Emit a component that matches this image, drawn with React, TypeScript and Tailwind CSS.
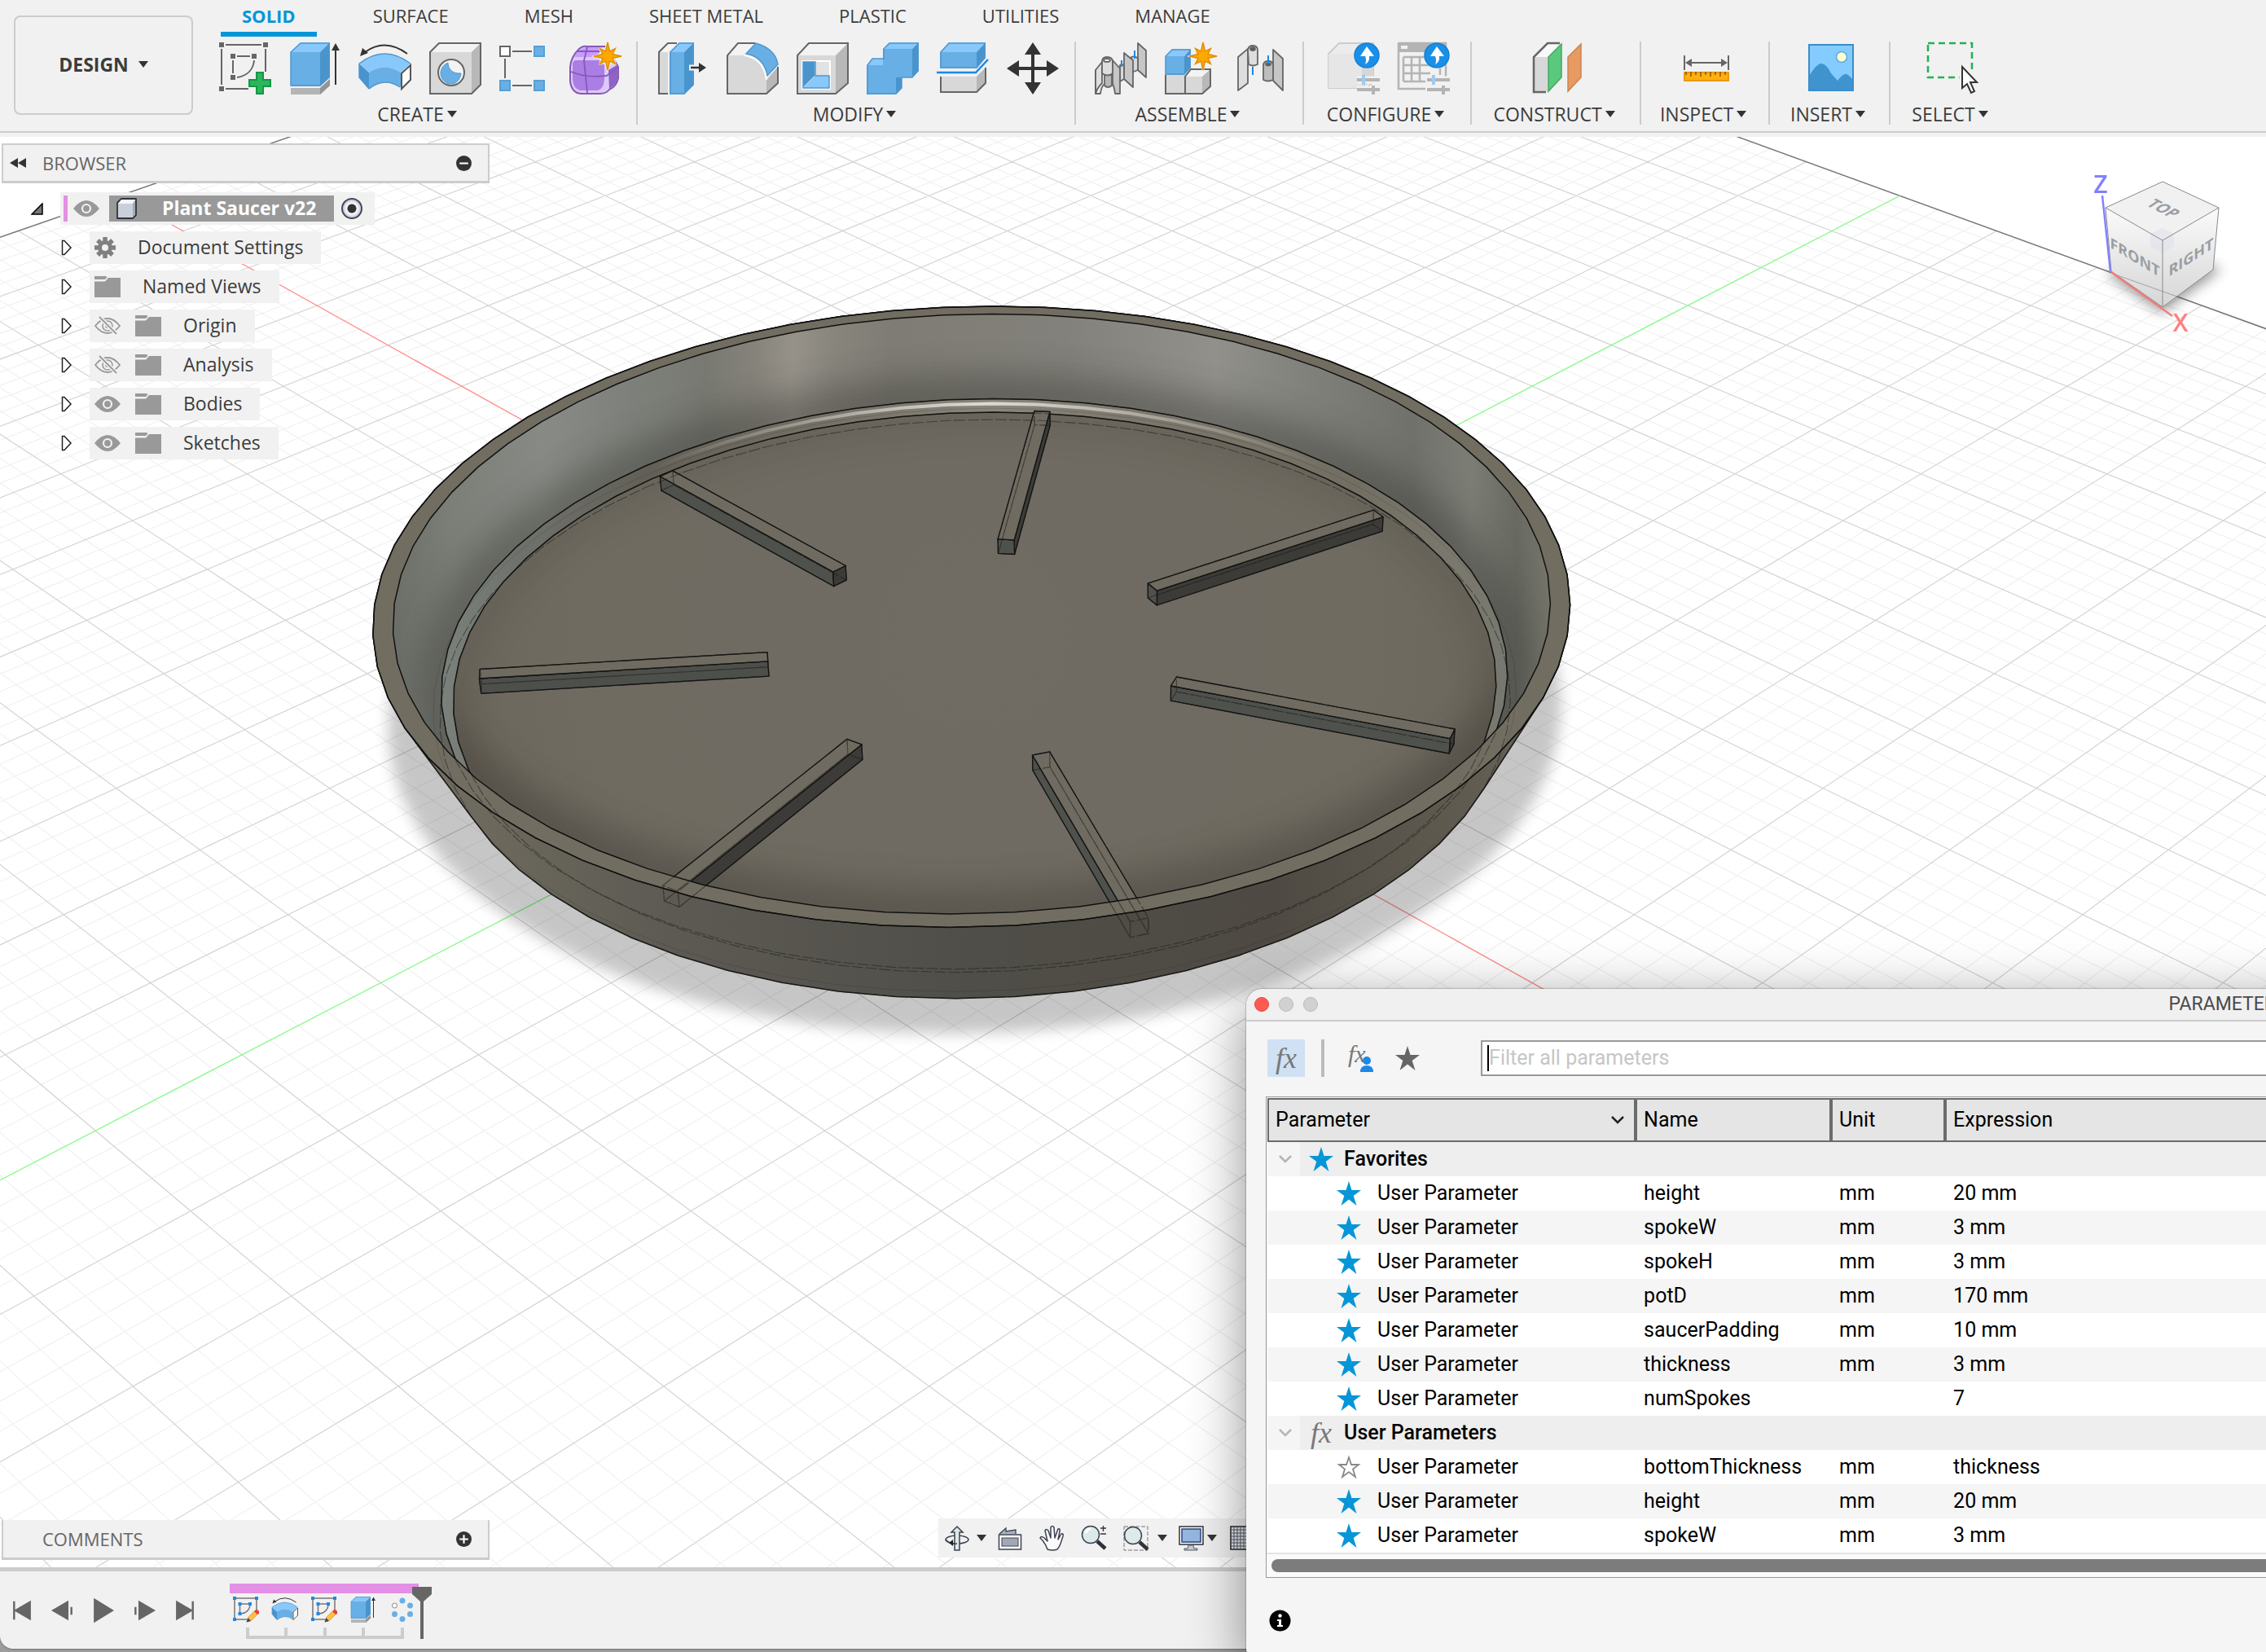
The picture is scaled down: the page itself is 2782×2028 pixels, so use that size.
import { useState } from 'react';
import type { ReactNode } from 'react';

// ---------------------------------------------------------------------------
// Camera: maps millimetres on the build plane (u, v) and height h to the canvas
// ---------------------------------------------------------------------------
type Point = [number, number];

const UNIT = 0.0009344;

function project(u: number, v: number, h = 0): Point {
  const w = 1 + (u + v - h) * UNIT;
  return [
    (1200 + UNIT * (-3950 * u + 6739 * v - 1391 * h)) / w,
    (827 - UNIT * (2043 * u + 2043 * v + 7218 * h)) / w
  ];
}

function circle(radius: number, h: number, steps = 64): Point[] {
  return Array.from({ length: steps }, (_, i) => {
    const a = (i / steps) * Math.PI * 2;
    return project(radius * Math.cos(a), radius * Math.sin(a), h);
  });
}

function toPath(points: Point[], close = true) {
  return 'M' + points.map(([x, y]) => `${x.toFixed(1)} ${y.toFixed(1)}`).join('L') + (close ? 'Z' : '');
}

function hull(points: Point[]): Point[] {
  const sorted = [...points].sort((a, b) => a[0] - b[0] || a[1] - b[1]);
  const cross = (o: Point, a: Point, b: Point) =>
    (a[0] - o[0]) * (b[1] - o[1]) - (a[1] - o[1]) * (b[0] - o[0]);
  const half = (list: Point[]) => {
    const out: Point[] = [];
    for (const p of list) {
      while (out.length > 1 && cross(out[out.length - 2], out[out.length - 1], p) <= 0) out.pop();
      out.push(p);
    }
    out.pop();
    return out;
  };
  return [...half(sorted), ...half(sorted.reverse())];
}

const EXTENT = 275;

function gridLines(isMajor: boolean) {
  let d = '';
  for (let i = -55; i <= 55; i++) {
    if ((i % 5 === 0) !== isMajor || i === 0) continue;
    const k = i * 5;
    d += toPath([project(k, -EXTENT), project(k, EXTENT)], false);
    d += toPath([project(-EXTENT, k), project(EXTENT, k)], false);
  }
  return d;
}

const MINOR_GRID = gridLines(false);
const MAJOR_GRID = gridLines(true);
const GRID_EDGE = toPath([project(EXTENT, -EXTENT), project(EXTENT, EXTENT), project(-EXTENT, EXTENT)], false);
const X_AXIS = toPath([project(-EXTENT, 0), project(EXTENT, 0)], false);
const Y_AXIS = toPath([project(0, -EXTENT), project(0, EXTENT)], false);

const RIM_OUTER = toPath(circle(101.1, 20));
const RIM_INNER = toPath(circle(97.8, 20));
const BASE_OUTER = toPath(circle(92.3, 0));
const BASE_LIP = toPath(circle(93.2, 2));
const FILLET_TOP = toPath(circle(91.5, 5));
const FILLET_SHINE = toPath(circle(90.8, 4.3));
const FLOOR = toPath(circle(89.7, 3));
const SHADOW = toPath(circle(101, 0));
const SILHOUETTE = toPath(hull([...circle(101.1, 20), ...circle(92.3, 0)]));

const SPOKES = Array.from({ length: 7 }, (_, i) => {
  const a = (i / 7) * Math.PI * 2;
  const dir: Point = [Math.cos(a), Math.sin(a)];
  const corner = (r: number, side: number, h: number) =>
    project(dir[0] * r - dir[1] * side, dir[1] * r + dir[0] * side, h);
  const ring = (h: number) => [corner(36, -1.5, h), corner(85, -1.5, h), corner(85, 1.5, h), corner(36, 1.5, h)];
  const bottom = ring(3);
  const top = ring(6);
  const faces = top.map((p, n) => {
    const m = (n + 1) % 4;
    const q = top[m];
    // top edge running right to left on the near side faces the viewer
    const visible = q[0] < p[0];
    const slope = (q[1] - p[1]) / (q[0] - p[0]);
    const fill = slope > 0.05 ? '#4f524c' : slope < -0.2 ? '#3c3b37' : '#4d4f4a';
    return { d: toPath([p, q, bottom[m], bottom[n]]), visible, fill };
  });
  return { top: toPath(top), bottom: toPath(bottom), faces };
});

function Model() {
  return (
    <svg
      className="absolute inset-0 h-full w-full"
      viewBox="0 168 2782 1756"
      preserveAspectRatio="xMinYMin slice"
      aria-hidden="true"
    >
      <defs>
        <filter id="soft" x="-10%" y="-10%" width="120%" height="120%">
          <feGaussianBlur stdDeviation="9" />
        </filter>
        <filter id="softer" x="-20%" y="-20%" width="140%" height="140%">
          <feGaussianBlur stdDeviation="20" />
        </filter>
        <clipPath id="inside">
          <path d={RIM_INNER} />
        </clipPath>
        <clipPath id="floorClip">
          <path d={FLOOR} />
        </clipPath>
        <linearGradient id="outerWall" gradientUnits="userSpaceOnUse" x1="458" x2="1928" y1="0" y2="0">
          <stop offset="0" stopColor="#77736a" />
          <stop offset="0.1" stopColor="#6c685c" />
          <stop offset="0.25" stopColor="#5c5a53" />
          <stop offset="0.5" stopColor="#504e48" />
          <stop offset="0.75" stopColor="#4e4a43" />
          <stop offset="0.92" stopColor="#605c51" />
          <stop offset="1" stopColor="#6c685c" />
        </linearGradient>
        <linearGradient id="innerWall" gradientUnits="userSpaceOnUse" x1="483" x2="1905" y1="0" y2="0">
          <stop offset="0" stopColor="#6c6f68" />
          <stop offset="0.05" stopColor="#7c7f78" />
          <stop offset="0.13" stopColor="#888b85" />
          <stop offset="0.21" stopColor="#7d807a" />
          <stop offset="0.27" stopColor="#787972" />
          <stop offset="0.31" stopColor="#85827a" />
          <stop offset="0.345" stopColor="#96928a" />
          <stop offset="0.38" stopColor="#88857d" />
          <stop offset="0.43" stopColor="#7e7c74" />
          <stop offset="0.58" stopColor="#83817b" />
          <stop offset="0.71" stopColor="#91908b" />
          <stop offset="0.8" stopColor="#7e7f79" />
          <stop offset="0.88" stopColor="#70716b" />
          <stop offset="0.93" stopColor="#7c7e76" />
          <stop offset="0.97" stopColor="#686a62" />
          <stop offset="1" stopColor="#76756b" />
        </linearGradient>
        <linearGradient id="fillet" gradientUnits="userSpaceOnUse" x1="530" x2="1860" y1="0" y2="0">
          <stop offset="0" stopColor="#7c827d" />
          <stop offset="0.08" stopColor="#6f726c" />
          <stop offset="0.2" stopColor="#625f56" />
          <stop offset="0.4" stopColor="#7a756a" />
          <stop offset="0.52" stopColor="#8b867b" />
          <stop offset="0.64" stopColor="#7d786c" />
          <stop offset="0.85" stopColor="#726e62" />
          <stop offset="0.95" stopColor="#7b786d" />
          <stop offset="1" stopColor="#757870" />
        </linearGradient>
        <linearGradient id="shine" gradientUnits="userSpaceOnUse" x1="800" x2="1620" y1="0" y2="0">
          <stop offset="0" stopColor="#ffffff" stopOpacity="0" />
          <stop offset="0.5" stopColor="#ffffff" stopOpacity="0.7" />
          <stop offset="1" stopColor="#ffffff" stopOpacity="0" />
        </linearGradient>
        <radialGradient id="floorFill" gradientUnits="userSpaceOnUse" cx="1195" cy="780" r="690">
          <stop offset="0" stopColor="#706b63" />
          <stop offset="0.7" stopColor="#6f6b61" />
          <stop offset="1" stopColor="#6b665c" />
        </radialGradient>
      </defs>

      <rect x="0" y="168" width="2782" height="1756" fill="#ffffff" />
      <path d={MINOR_GRID} stroke="#f1f1f1" strokeWidth="1.2" fill="none" />
      <path d={MAJOR_GRID} stroke="#d4d4d4" strokeWidth="1.2" fill="none" />
      <path d={GRID_EDGE} stroke="#777777" strokeWidth="1.4" fill="none" />
      <path d={X_AXIS} stroke="#ff9090" strokeWidth="1.4" />
      <path d={Y_AXIS} stroke="#90f990" strokeWidth="1.4" />

      <path d={SHADOW} fill="#000000" opacity="0.22" filter="url(#soft)" />

      {/* Saucer body */}
      <path d={SILHOUETTE} fill="url(#outerWall)" stroke="#1c1b19" strokeWidth="1.6" />
      <path d={RIM_OUTER} fill="#726d61" stroke="#111111" strokeWidth="1.3" />
      <path d={RIM_INNER} fill="url(#innerWall)" />
      <g clipPath="url(#inside)">
        <path d={FILLET_TOP} fill="none" stroke="#3b3b36" strokeWidth="60" opacity="0.45" filter="url(#softer)" />
        <path d={FILLET_TOP} fill="url(#fillet)" stroke="#111111" strokeWidth="1.5" />
        <path d={FILLET_SHINE} fill="none" stroke="url(#shine)" strokeWidth="4" />
        <path d={FLOOR} fill="url(#floorFill)" />
        <g clipPath="url(#floorClip)">
          <path d={RIM_INNER} fill="none" stroke="#3d3831" strokeWidth="60" opacity="0.4" filter="url(#softer)" />
          <path d={FLOOR} fill="none" stroke="#4c463d" strokeWidth="26" opacity="0.35" filter="url(#softer)" />
        </g>
        <path d={FLOOR} fill="none" stroke="#111111" strokeWidth="1.5" />
        {SPOKES.map((spoke) => (
          <g key={spoke.top} stroke="#111111" strokeWidth="1.3" strokeLinejoin="round">
            {spoke.faces.filter((face) => face.visible).map((face) => (
              <path key={face.d} d={face.d} fill={face.fill} />
            ))}
            <path d={spoke.top} fill="#6f6b60" />
          </g>
        ))}
      </g>

      {/* Hidden edges */}
      <g fill="none" stroke="#1a1a18" strokeWidth="1.1" strokeDasharray="14 3" opacity="0.5">
        <path d={BASE_OUTER} />
        <path d={FLOOR} />
        <path d={FILLET_TOP} />
        {SPOKES.map((spoke) => (
          <g key={spoke.bottom}>
            <path d={spoke.bottom} />
            <path d={spoke.top} />
            {spoke.faces.map((face) => (
              <path key={face.d} d={face.d} />
            ))}
          </g>
        ))}
      </g>
      <path d={BASE_LIP} fill="none" stroke="#111111" strokeWidth="1" opacity="0.15" />
      <path d={RIM_INNER} fill="none" stroke="#111111" strokeWidth="1.5" />
      <path d={RIM_OUTER} fill="none" stroke="#111111" strokeWidth="1.5" />
    </svg>
  );
}

function ViewCube() {
  return (
    <svg className="absolute top-0 right-0 h-[292px] w-[382px]" viewBox="0 8 382 292" role="img" aria-label="View cube">
      <defs>
        <filter id="cubeShadow" x="-30%" y="-30%" width="160%" height="160%">
          <feGaussianBlur stdDeviation="8" />
        </filter>
        <linearGradient id="cubeSide" x1="0" x2="0" y1="0" y2="1">
          <stop offset="0" stopColor="#fafafa" />
          <stop offset="1" stopColor="#d6d6d6" />
        </linearGradient>
      </defs>
      <path d="M186 176L254 148L328 170L254 224Z" fill="#000000" opacity="0.4" filter="url(#cubeShadow)" />
      <path d="M255 63L185 95L255 135L324 95Z" fill="#f1f1f1" />
      <path d="M185 95L255 135V217L192 173Z" fill="url(#cubeSide)" />
      <path d="M324 95L255 135V217L317 171Z" fill="url(#cubeSide)" />
      <path d="M255 120L269 127V142L255 151L240 142V127Z" fill="#dfe0ea" opacity="0.55" />
      <path
        d="M255 63L185 95L255 135L324 95ZM185 95L192 173L255 217L317 171L324 95M255 135V217"
        fill="none"
        stroke="#8a8a8a"
        strokeLinejoin="round"
      />
      <path d="M194 176L382 243" stroke="#777777" strokeWidth="1" opacity="0.6" />
      <g fill="#9a9ea3" fontFamily='"Open Sans", sans-serif' fontWeight="700" textAnchor="middle">
        <text transform="translate(250 100) rotate(27) skewX(-30)" fontSize="18">TOP</text>
        <text transform="translate(221 162) skewY(31)" fontSize="18">FRONT</text>
        <text transform="translate(290 162) skewY(-33)" fontSize="18">RIGHT</text>
      </g>
      <path d="M181 80L191 173" stroke="#8080ff" strokeWidth="2.4" />
      <path d="M192 174L267 228" stroke="#f47c7c" strokeWidth="2.4" />
      <g fontFamily='"Open Sans", sans-serif' fontSize="30" fontWeight="600" textAnchor="middle">
        <text x="179" y="77" fill="#8080ff">Z</text>
        <text x="277" y="247" fill="#ff7f7f">X</text>
      </g>
    </svg>
  );
}

// ---------------------------------------------------------------------------
// Icons
// ---------------------------------------------------------------------------
function Icon({ children, size = 'size-16', box = '0 0 64 64' }: { children: ReactNode; size?: string; box?: string }) {
  return (
    <svg className={`${size} shrink-0 overflow-visible`} viewBox={box} fill="none" aria-hidden="true">
      {children}
    </svg>
  );
}

function burst(cx: number, cy: number, outer: number, inner: number, n: number) {
  return Array.from({ length: n * 2 }, (_, i) => {
    const r = i % 2 ? inner : i % 4 ? outer * 0.78 : outer;
    const a = (i / (n * 2)) * Math.PI * 2 - Math.PI / 2;
    return `${(cx + r * Math.cos(a)).toFixed(1)},${(cy + r * Math.sin(a)).toFixed(1)}`;
  }).join(' ');
}

const Burst = () => (
  <>
    <polygon points={burst(47, 17, 20, 10, 8)} fill="#f1f1f1" />
    <polygon points={burst(47, 17, 17, 6.5, 8)} fill="#ffa800" stroke="#e08f00" strokeWidth="1.5" />
  </>
);

const SketchIcon = () => (
  <Icon>
    <path d="M8 3H52M3 8V52M57 8V36M8 57H36M22 17H38M17 22V38M43 22C42 33 35 41 22 43" stroke="#666666" strokeWidth="2" />
    <path fill="#666666" d="M0 0h6v6H0zM54 0h6v6h-6zM0 54h6v6H0zM14 14h6v6h-6zM40 14h6v6h-6zM14 40h6v6h-6z" />
    <path d="M46 37h8v9h9v8h-9v9h-8v-9h-9v-8h9z" fill="#2bb659" stroke="#149645" strokeWidth="2" />
  </Icon>
);

const ExtrudeShape = () => (
  <>
    <path d="M2 56H38L50 45V53L38 64H2Z" fill="#b5b5b5" />
    <path d="M38 56L50 45V53L38 64Z" fill="#949494" />
    <path d="M2 12H38V54H2Z" fill="#68afe5" />
    <path d="M2 12L14 0H50L38 12Z" fill="#88c8fa" />
    <path d="M38 12L50 0V43L38 54Z" fill="#4a94cd" />
    <path d="M2 12L14 1H49V43L38 53H2Z" stroke="#4f97cf" strokeWidth="1.5" />
    <path d="M57 52V8" stroke="#333333" strokeWidth="2" />
    <path d="M52 10L57 1L62 10Z" fill="#333333" />
  </>
);

const RevolveShape = () => (
  <>
    <path d="M0 26L12 37V57L0 43Z" fill="#4a94cd" />
    <path d="M0 26Q31 2 63 26L51 37Q31 24 12 37Z" fill="#88c8fa" />
    <path d="M12 37Q31 24 51 37V55Q31 42 12 57Z" fill="#68afe5" />
    <path d="M0 26Q31 2 63 26M12 57Q31 42 50 55M0 26V43L12 57" stroke="#4f97cf" strokeWidth="1.5" />
    <path d="M52 38L63 28V46L52 57Z" fill="#ffffff" stroke="#555555" strokeWidth="2" />
    <path d="M59 14Q32 -6 7 12" stroke="#333333" strokeWidth="2" />
    <path d="M1 17L4 7L11 13Z" fill="#333333" />
  </>
);

const HoleIcon = () => (
  <Icon>
    <path d="M1 12L12 1H63L52 12Z" fill="#f3f3f3" />
    <path d="M1 12H52V63H1Z" fill="#d8d8d8" />
    <path d="M52 12L63 1V52L52 63Z" fill="#b8b8b8" />
    <path d="M1 12L12 1H63V52L52 63H1Z" stroke="#666666" strokeWidth="2" />
    <circle cx="27" cy="37" r="16" fill="#f3f3f3" stroke="#666666" strokeWidth="2" />
    <path d="M23 25C23 33 29 39 39 38C38 46 33 51 27 51C20 51 14 45 14 38C14 32 18 27 23 25Z" fill="#68afe5" stroke="#4f97cf" />
  </Icon>
);

const PatternIcon = () => (
  <Icon>
    <path d="M1 5h12v12H1z" fill="#ffffff" stroke="#666666" strokeWidth="2" />
    <path d="M43 5h12v12H43zM1 47h12v12H1zM43 47h12v12H43z" fill="#68afe5" stroke="#579fd5" strokeWidth="2" />
    <path d="M16 11H40M16 53H40M7 20V44" stroke="#666666" strokeWidth="2" />
  </Icon>
);

const FormIcon = () => (
  <Icon>
    <path d="M11 9Q16 4 22 5H46L60 30V44Q58 54 49 58Q45 63 38 63H14Q3 62 1 48V30Q2 18 11 9Z" fill="#ddc8f7" stroke="#8659b8" strokeWidth="2" />
    <path d="M6 18Q10 9 20 6H40L34 18Z" fill="#c79bfb" />
    <path d="M4 27Q4 22 9 22H36Q43 22 43 30V46Q42 58 34 59H13Q5 57 4 46Z" fill="#ab7ee6" />
    <path d="M48 34L60 27V42Q58 52 49 57Z" fill="#8f63c6" />
    <path d="M22 6L18 22Q20 42 22 62M2 36Q20 44 46 41L60 30M10 11H42" stroke="#8659b8" strokeWidth="1.8" />
    <Burst />
  </Icon>
);

const PressPullIcon = () => (
  <Icon>
    <path d="M3 13L14 1H25L14 12V63H3Z" fill="#d8d8d8" />
    <path d="M3 12L14 1H25L14 12Z" fill="#f5f5f5" />
    <path d="M25 1H14L3 12V63H14" stroke="#666666" strokeWidth="2" />
    <path d="M16 12H34V64H16Z" fill="#68afe5" />
    <path d="M16 12L28 0H46L34 12Z" fill="#88c8fa" />
    <path d="M34 12L46 0V52L34 64Z" fill="#4a94cd" />
    <path d="M17 12L28 1H45V52L34 63H17Z" stroke="#4f97cf" strokeWidth="1.5" />
    <path d="M40 31H56" stroke="#f1f1f1" strokeWidth="7" />
    <path d="M42 31H54" stroke="#333333" strokeWidth="2.5" />
    <path d="M52 25L61 31L52 37Z" fill="#333333" />
  </Icon>
);

const FilletIcon = () => (
  <Icon>
    <path d="M1 16L14 1H33L24 13V16Z" fill="#f3f3f3" />
    <path d="M1 16H23Q46 22 49 44V63H1Z" fill="#d8d8d8" />
    <path d="M49 46L63 30V50L49 63Z" fill="#b8b8b8" />
    <path d="M35 1H14L1 16V63H49L63 50V30" stroke="#666666" strokeWidth="2" />
    <path d="M24 14L36 1Q60 8 63 27L50 41Q46 18 24 14Z" fill="#68afe5" stroke="#4f97cf" strokeWidth="1.5" />
    <path d="M22 16Q46 20 49 46" stroke="#ffffff" strokeWidth="2" />
  </Icon>
);

const ShellIcon = () => (
  <Icon>
    <path d="M1 16L15 1H63L48 16Z" fill="#f3f3f3" />
    <path d="M1 16H48V63H1Z" fill="#d8d8d8" />
    <path d="M48 16L63 1V50L48 63Z" fill="#b8b8b8" />
    <path d="M1 16L15 1H63V50L48 63H1Z" stroke="#666666" strokeWidth="2" />
    <path d="M7 23H41V57H7Z" fill="#e2e2e2" stroke="#ffffff" strokeWidth="2" />
    <path d="M8 24H22V41L8 55Z" fill="#4a94cd" />
    <path d="M8 56L23 41H40V56Z" fill="#88c8fa" />
    <path d="M8 24V56H40V41H23V24Z" stroke="#4f97cf" strokeWidth="1.5" />
  </Icon>
);

const CombineIcon = () => (
  <Icon>
    <path d="M20 8H56V43H36V64H0V28H20Z" fill="#68afe5" />
    <path d="M20 8L28 0H64L56 8ZM0 28L7 20H20V28Z" fill="#88c8fa" />
    <path d="M56 8L64 0V35L56 43ZM36 43H43V56L36 64Z" fill="#4a94cd" />
    <path d="M21 20V8L28 1H63V35L56 43H43V56L36 63H1V28L7 20Z" stroke="#4f97cf" strokeWidth="1.5" />
  </Icon>
);

const SplitIcon = () => (
  <Icon>
    <path d="M4 12H49V32H4Z" fill="#68afe5" />
    <path d="M4 12L15 0H60L49 12Z" fill="#88c8fa" />
    <path d="M49 12L60 0V19L49 32Z" fill="#4a94cd" />
    <path d="M5 12L15 1H59V19L49 31H5Z" stroke="#4f97cf" strokeWidth="1.5" />
    <path d="M0 37H48L63 21" stroke="#1e88e5" strokeWidth="2.5" />
    <path d="M5 42H49L60 31V50L49 61H5Z" fill="#d8d8d8" />
    <path d="M49 42L60 31V50L49 61Z" fill="#b8b8b8" />
    <path d="M5 42V61H49L60 50V31" stroke="#666666" strokeWidth="2" />
  </Icon>
);

const MoveIcon = () => (
  <Icon>
    <path d="M32 10V54M10 32H54" stroke="#333333" strokeWidth="4" />
    <path d="M32 0L42 15H22ZM32 64L42 49H22ZM0 32L15 22V42ZM64 32L49 22V42Z" fill="#333333" />
  </Icon>
);

const JointGroupIcon = () => (
  <Icon>
    <g stroke="#666666" strokeWidth="1.8" strokeLinejoin="round">
      <path d="M53 1L63 10V43L53 34Z" fill="#c6c6c6" />
      <path d="M45 37V18Q50 16 53 20V34Z" fill="#d8d8d8" />
      <path d="M36 13L47 22V55L36 45Z" fill="#c6c6c6" />
      <path d="M31 28Q34 26 36 29V45L31 48Z" fill="#d8d8d8" />
      <path d="M12 40H21V53Q16 57 12 53Z" fill="#b8b8b8" />
      <path d="M1 34L9 24V50Q3 56 1 63Z" fill="#dedede" />
      <path d="M22 22L31 32V63H25Q24 55 22 51Z" fill="#c6c6c6" />
      <path d="M9 24Q9 18 15 18Q22 18 22 24V38Q16 43 9 38Z" fill="#dedede" />
      <path d="M1 34V63H7Q8 54 12 51" />
      <ellipse cx="15" cy="22" rx="4" ry="2" fill="#ffffff" />
    </g>
    <path d="M33 22V30M49 10V20" stroke="#1e88e5" strokeWidth="2" />
  </Icon>
);

const NewComponentIcon = () => (
  <Icon>
    <path d="M1 40H24V63H1ZM24 40H46V63H24Z" fill="#d8d8d8" />
    <path d="M24 42L32 33H56L46 42Z" fill="#f3f3f3" />
    <path d="M46 42L56 33V54L46 63Z" fill="#b8b8b8" />
    <path d="M1 40V63H46L56 54V33H32L25 42V63" stroke="#666666" strokeWidth="2" />
    <path d="M1 17H24V40H1Z" fill="#68afe5" />
    <path d="M1 17L9 8H32L24 17Z" fill="#88c8fa" />
    <path d="M24 17L32 8V31L24 40Z" fill="#4a94cd" />
    <path d="M1 17L9 9H31V31L24 39H1Z" stroke="#4f97cf" strokeWidth="1.5" />
    <Burst />
  </Icon>
);

const JointIcon = () => (
  <Icon>
    <g stroke="#666666" strokeWidth="1.8" strokeLinejoin="round">
      <path d="M4 18L16 8V50L4 59Z" fill="#dedede" />
      <path d="M16 9Q17 4 22 4Q28 4 28 10V27Q22 30 17 27Z" fill="#dedede" />
      <ellipse cx="22" cy="8" rx="3" ry="2" fill="#555555" />
      <path d="M47 9L59 20V59L47 47Z" fill="#c6c6c6" />
      <path d="M35 27Q36 23 41 23Q47 23 47 28V46Q41 49 35 46Z" fill="#bdbdbd" />
      <ellipse cx="41" cy="27" rx="3" ry="1.5" fill="#555555" />
    </g>
    <path d="M22 30V40M41 16V26" stroke="#1e88e5" strokeWidth="2" />
  </Icon>
);

const UpBadge = () => (
  <>
    <circle cx="48" cy="16" r="15" fill="#1a8fe8" stroke="#1480d2" strokeWidth="1.5" />
    <path d="M48 5L57 17H51Q52 24 46 27Q48 22 46 17H40Z" fill="#ffffff" />
    <path d="M36 46H64M36 58H64" stroke="#f1f1f1" strokeWidth="9" />
    <path d="M36 46H64M36 58H64M56 53V64" stroke="#b4b4b4" strokeWidth="4" />
    <path d="M44 40V52" stroke="#9dcbf0" strokeWidth="4" />
  </>
);

const ConfigureModelIcon = () => (
  <Icon>
    <path d="M1 14L14 1H56V48L48 56H1Z" fill="#ececec" stroke="#c0c0c0" strokeWidth="1.5" />
    <path d="M1 14H42V56H1Z" fill="#e6e6e6" />
    <path d="M42 28L56 22V46L42 56Z" fill="#d6d6d6" />
    <UpBadge />
  </Icon>
);

const ConfigureTableIcon = () => (
  <Icon>
    <path d="M1 1H59V42M1 1V57H34" stroke="#b4b4b4" strokeWidth="2.5" />
    <path d="M0 0H60V12H0Z" fill="#b4b4b4" />
    <path d="M4 4H12V8H4Z" fill="#f1f1f1" />
    <path d="M7 18H36M7 28H40M7 38H40M7 48H34M7 18V48M17 18V48M27 18V48M52 32V40" stroke="#b4b4b4" strokeWidth="2.5" />
    <UpBadge />
  </Icon>
);

const ConstructIcon = () => (
  <Icon>
    <path d="M3 18L19 1H35L20 18Z" fill="#f8f8f8" />
    <path d="M3 18H20V61H3Z" fill="#d8d8d8" />
    <path d="M35 1H20L3 18V61H18" stroke="#666666" strokeWidth="2.5" />
    <path d="M21 18L37 2V43L21 60Z" fill="#5bc97d" stroke="#41a863" strokeWidth="1.5" />
    <path d="M45 18L61 2V43L45 60Z" fill="#e89a63" stroke="#cc8350" strokeWidth="1.5" />
  </Icon>
);

const InspectIcon = () => (
  <Icon>
    <path d="M5 16V34M59 16V34M10 25H54" stroke="#666666" strokeWidth="2" />
    <path d="M6 25L14 20V30ZM58 25L50 20V30Z" fill="#666666" />
    <path d="M5 37H59V47H5Z" fill="#ffaf0f" stroke="#e89a00" strokeWidth="2" />
    <path d="M7 36V40M13 36V42M19 36V40M25 36V42M31 36V40M37 36V42M43 36V40M49 36V42M55 36V40" stroke="#8a5a00" strokeWidth="1.5" />
  </Icon>
);

const InsertIcon = () => (
  <Icon>
    <path d="M4 3H60V59H4Z" fill="#84ccff" />
    <path d="M4 43Q14 26 20 26Q26 26 32 38L40 47Q47 38 50 39Q54 39 60 48V59H4Z" fill="#3f94cf" />
    <circle cx="45" cy="18" r="6.5" fill="#ffffd0" stroke="#5fa9dd" strokeWidth="1.5" />
    <path d="M5 3H59V59H5Z" stroke="#3b8dc8" strokeWidth="2" />
  </Icon>
);

const SelectIcon = () => (
  <Icon>
    <path d="M1 1H55V43H1Z" stroke="#1fb254" strokeWidth="2.5" strokeDasharray="8 5" />
    <path d="M42 27V58L49 51L54 64L60 61L55 49H64Z" fill="#ffffff" stroke="#f1f1f1" strokeWidth="5" />
    <path d="M43 30V56L49 51L54 62L58 60L53 49H61Z" fill="#ffffff" stroke="#333333" strokeWidth="2" />
  </Icon>
);

// Timeline variant of the sketch icon, with a pencil
const SketchEdit = () => (
  <Icon size="size-8">
    <path d="M4 4H58M4 4V56M58 4V40M4 56H36M17 18H42M17 18V42M42 18C42 32 32 42 17 42" stroke="#777777" strokeWidth="3" />
    <path d="M0 0h8v8H0zM54 0h8v8h-8zM0 52h8v8H0zM13 14h8v8h-8zM38 14h8v8h-8zM13 38h8v8h-8z" fill="#1e88e5" />
    <path d="M34 62L38 50L52 36L60 44L46 58Z" fill="#ffbd45" stroke="#d99a2b" strokeWidth="1.5" />
    <path d="M52 36Q58 28 64 36V42L60 44Z" fill="#ee3a3a" />
    <path d="M33 63L37 52L44 60Z" fill="#444444" />
  </Icon>
);

const CircularPattern = () => (
  <Icon size="size-8">
    <g fill="#68afe5">
      <circle cx="32" cy="10" r="7" />
      <circle cx="51" cy="22" r="7" />
      <circle cx="51" cy="43" r="7" />
      <circle cx="32" cy="55" r="7" />
      <circle cx="13" cy="43" r="7" />
    </g>
    <circle cx="13" cy="22" r="6" fill="#ffffff" stroke="#888888" strokeWidth="2" />
  </Icon>
);

const Caret = () => (
  <svg className="h-2.5 w-3" viewBox="0 0 12 10" aria-hidden="true">
    <path d="M0 1H12L6 9Z" fill="#333333" />
  </svg>
);

const EyeIcon = () => (
  <Icon size="h-5 w-8" box="0 0 32 20">
    <path d="M0 10Q8 0 16 0T32 10Q24 20 16 20T0 10Z" fill="#999999" />
    <circle cx="16" cy="10" r="5" stroke="#f1f1f1" strokeWidth="2.2" />
  </Icon>
);

const EyeOffIcon = () => (
  <Icon size="h-5 w-8" box="0 0 32 20">
    <path d="M1 10Q8 1 16 1T31 10Q24 19 16 19T1 10Z" stroke="#999999" strokeWidth="1.8" />
    <circle cx="16" cy="10" r="6" stroke="#999999" strokeWidth="1.6" />
    <circle cx="16" cy="10" r="2.2" stroke="#999999" strokeWidth="1.5" />
    <path d="M6 -1L27 20" stroke="#f1f1f1" strokeWidth="5" />
    <path d="M6 -1L27 20" stroke="#999999" strokeWidth="1.8" />
  </Icon>
);

const FolderIcon = () => (
  <Icon size="h-[26px] w-8" box="0 0 32 26">
    <path d="M0 6.5H13L17 2H32V26H0Z" fill="#999999" />
    <path d="M0 0H13Q16 0 15 2L13 4H0Z" fill="#999999" />
  </Icon>
);

const GearIcon = () => (
  <Icon size="size-[26px]" box="0 0 26 26">
    <path d="M13 0V26M0 13H26M4 4L22 22M22 4L4 22" stroke="#808080" strokeWidth="5.5" />
    <circle cx="13" cy="13" r="9" fill="#808080" />
    <circle cx="13" cy="13" r="4" fill="#f1f1f1" />
  </Icon>
);

const BodyIcon = () => (
  <Icon size="size-[26px]" box="0 0 26 26">
    <path d="M1 6L6 1H24V21L20 25H1Z" fill="#c9cfdb" stroke="#2f3338" strokeWidth="1.8" strokeLinejoin="round" />
    <path d="M2 7L6 2H23L20 7Z" fill="#f4f6fa" />
    <path d="M20 7L23 3V20L20 24Z" fill="#a3abb9" />
  </Icon>
);

const StarIcon = ({ filled = true, color = '#0696d7' }: { filled?: boolean; color?: string }) => (
  <Icon size="size-[30px]" box="0 0 30 30">
    <path
      d={
        filled
          ? 'M15 0L18.5 11H30L20.7 18L24.5 30L15 22.5L5.5 30L9.3 18L0 11H11.5Z'
          : 'M15 3L18 12H27L20 17.5L23 27L15 21L7 27L10 17.5L3 12H12Z'
      }
      fill={filled ? color : '#ffffff'}
      stroke={filled ? 'none' : '#888888'}
      strokeWidth="1.8"
    />
  </Icon>
);

const FxMark = () => (
  <span className="font-['Liberation_Serif',serif] text-[36px] leading-8 text-[#777777] italic">fx</span>
);

// ---------------------------------------------------------------------------
// Toolbar
// ---------------------------------------------------------------------------
const TABS = ['SOLID', 'SURFACE', 'MESH', 'SHEET METAL', 'PLASTIC', 'UTILITIES', 'MANAGE'];

const GROUPS: { label: string; width: string; icons: [string, ReactNode][] }[] = [
  {
    label: 'CREATE',
    width: 'w-[536px]',
    icons: [
      ['Create sketch', <SketchIcon />],
      ['Extrude', <Icon><ExtrudeShape /></Icon>],
      ['Revolve', <Icon><RevolveShape /></Icon>],
      ['Hole', <HoleIcon />],
      ['Pattern', <PatternIcon />],
      ['Create form', <FormIcon />]
    ]
  },
  {
    label: 'MODIFY',
    width: 'w-[538px]',
    icons: [
      ['Press pull', <PressPullIcon />],
      ['Fillet', <FilletIcon />],
      ['Shell', <ShellIcon />],
      ['Combine', <CombineIcon />],
      ['Split body', <SplitIcon />],
      ['Move', <MoveIcon />]
    ]
  },
  {
    label: 'ASSEMBLE',
    width: 'w-[280px]',
    icons: [
      ['Joint group', <JointGroupIcon />],
      ['New component', <NewComponentIcon />],
      ['Joint', <JointIcon />]
    ]
  },
  {
    label: 'CONFIGURE',
    width: 'w-[206px]',
    icons: [
      ['Configure model', <ConfigureModelIcon />],
      ['Configuration table', <ConfigureTableIcon />]
    ]
  },
  { label: 'CONSTRUCT', width: 'w-[208px]', icons: [['Offset plane', <ConstructIcon />]] },
  { label: 'INSPECT', width: 'w-[158px]', icons: [['Measure', <InspectIcon />]] },
  { label: 'INSERT', width: 'w-[148px]', icons: [['Insert image', <InsertIcon />]] },
  { label: 'SELECT', width: 'w-[152px]', icons: [['Select', <SelectIcon />]] }
];

function Toolbar() {
  const [activeTab, setActiveTab] = useState('SOLID');

  return (
    <header className="flex h-[168px] shrink-0 flex-col bg-[#f1f1f1]">
      <div className="flex h-[163px] border-b-2 border-[#cccccc]">
        <button className="mt-[19px] ml-[17px] flex h-[122px] w-[220px] items-center justify-center gap-3 rounded-lg border-2 border-[#cccccc] pb-0.5 text-[23px] font-bold text-[#3c3c3c]">
          DESIGN <Caret />
        </button>

        <div className="flex flex-col">
          <nav className="ml-[34px] flex h-[45px] gap-[45px]">
            {TABS.map((tab) => (
              <button
                key={tab}
                onClick={() => setActiveTab(tab)}
                className={
                  tab === activeTab
                    ? 'h-[45px] border-b-[6px] border-[#0696d7] px-[26px] text-[22px] leading-[39px] font-bold text-[#0696d7]'
                    : 'h-[45px] border-b-[6px] border-transparent px-6 text-[22px] leading-[39px] text-[#3c3c3c]'
                }
              >
                {tab}
              </button>
            ))}
          </nav>

          <div className="mt-1.5 ml-[10px] flex h-[102px]">
            {GROUPS.map((group) => (
              <section
                key={group.label}
                className={`${group.width} flex flex-col items-center border-r-2 border-[#cccccc] last:border-transparent`}
              >
                <div className="mt-px flex gap-[22px] pl-1">
                  {group.icons.map(([name, icon]) => (
                    <button key={name} aria-label={name}>
                      {icon}
                    </button>
                  ))}
                </div>
                <button className="mt-2 mr-1 flex items-center gap-1 text-[23px] leading-8 text-[#3c3c3c]">
                  {group.label} <Caret />
                </button>
              </section>
            ))}
          </div>
        </div>
      </div>
    </header>
  );
}

// ---------------------------------------------------------------------------
// Browser panel
// ---------------------------------------------------------------------------
const TREE = [
  { name: 'Document Settings', kind: 'gear' },
  { name: 'Named Views', kind: 'folder' },
  { name: 'Origin', kind: 'hidden' },
  { name: 'Analysis', kind: 'hidden' },
  { name: 'Bodies', kind: 'visible' },
  { name: 'Sketches', kind: 'visible' }
];

function BrowserPanel() {
  return (
    <aside className="absolute top-2 left-0.5 w-[599px] text-[23px] text-[#3c3c3c]">
      <div className="flex h-[49px] items-center border-2 border-b-[3px] border-[#cccccc] bg-[#f1f1f1] pr-5 pl-2">
        <button aria-label="Collapse panel">
          <svg className="h-3 w-[22px]" viewBox="0 0 22 12" aria-hidden="true">
            <path d="M0 6L10 0V12ZM10 6L20 0V12Z" fill="#333333" />
          </svg>
        </button>
        <h2 className="ml-[18px] text-[22px] text-[#666666]">BROWSER</h2>
        <button aria-label="Minimize" className="ml-auto">
          <Icon size="size-[19px]" box="0 0 18 18">
            <circle cx="9" cy="9" r="9" fill="#333333" />
            <path d="M4 9H14" stroke="#ffffff" strokeWidth="2" />
          </Icon>
        </button>
      </div>

      <div className="mt-[11px] flex h-10 items-center">
        <button aria-label="Collapse Plant Saucer v22" className="ml-9">
          <svg className="size-[15px]" viewBox="0 0 15 15" aria-hidden="true">
            <path d="M1 14H14V1Z" fill="#777777" stroke="#000000" strokeWidth="1.5" />
          </svg>
        </button>
        <div className="ml-[21px] flex h-10 w-[386px] items-center bg-[#f1f1f1] pl-1">
          <span className="h-8 w-[5px] bg-[#e38fe5]" />
          <button aria-label="Toggle visibility" className="ml-[7px] h-5">
            <EyeIcon />
          </button>
          <span className="ml-3 flex h-8 w-[276px] items-center bg-[#999999] pl-[9px] leading-8 font-bold text-white">
            <BodyIcon />
            <span className="ml-[30px] pb-0.5">Plant Saucer v22</span>
          </span>
          <input
            type="radio"
            defaultChecked
            aria-label="Activate component"
            className="ml-[9px] size-[26px] appearance-none rounded-full border-2 border-[#444a55] bg-[radial-gradient(circle,#333_0_5px,#fff_6px,#b8c0d0_12px)]"
          />
        </div>
      </div>

      <ul className="mt-2 space-y-2">
        {TREE.map((node) => (
          <li key={node.name} className="flex h-10 items-center">
            <button aria-label={`Expand ${node.name}`} className="ml-[73px]">
              <svg className="h-5 w-3.5" viewBox="0 0 14 20" aria-hidden="true">
                <path d="M1.5 1.5H4L12 10L4 18.5H1.5Z" fill="#ffffff" stroke="#222222" strokeWidth="1.5" />
              </svg>
            </button>
            <div className="ml-[21px] flex h-10 items-center bg-[#f1f1f1] pr-[22px] pl-1.5">
              {node.kind === 'gear' && <GearIcon />}
              {node.kind === 'folder' && <FolderIcon />}
              {(node.kind === 'hidden' || node.kind === 'visible') && (
                <span className="flex items-center gap-[18px]">
                  <button aria-label={`Toggle ${node.name}`} className="h-5">
                    {node.kind === 'hidden' ? <EyeOffIcon /> : <EyeIcon />}
                  </button>
                  <FolderIcon />
                </span>
              )}
              <span className="ml-[27px] pb-px">{node.name}</span>
            </div>
          </li>
        ))}
      </ul>
    </aside>
  );
}

function CommentsPanel() {
  return (
    <div className="absolute bottom-[9px] left-0.5 flex h-[49px] w-[599px] items-center border-x-2 border-b-[3px] border-[#cccccc] bg-[#f1f1f1] pr-5 pl-12">
      <h2 className="text-[22px] text-[#666666]">COMMENTS</h2>
      <button aria-label="Add comment" className="ml-auto">
        <Icon size="size-[19px]" box="0 0 18 18">
          <circle cx="9" cy="9" r="9" fill="#333333" />
          <path d="M4 9H14M9 4V14" stroke="#ffffff" strokeWidth="2" />
        </Icon>
      </button>
    </div>
  );
}

function NavigationBar() {
  return (
    <div className="absolute bottom-3 left-[1152px] flex h-12 items-center bg-[#f1f1f1] pr-5 pl-2">
      <button aria-label="Orbit" className="flex items-center gap-2">
        <Icon size="size-[31px]" box="0 0 31 31">
          <ellipse cx="15" cy="17" rx="14" ry="5" stroke="#3c4250" strokeWidth="1.5" />
          <path d="M12 30V8H8L15 1L22 8H18V30Z" fill="#dfe8e8" stroke="#3c4250" strokeWidth="1.5" />
          <path d="M1 17Q6 23 15 22" stroke="#3c4250" strokeWidth="1.5" />
          <path d="M5 21L10 17V25Z" fill="#222222" />
        </Icon>
        <Caret />
      </button>
      <button aria-label="Look at" className="ml-3.5">
        <Icon size="size-[30px]" box="0 0 30 30">
          <path d="M2 10L10 3V7L22 5V10" fill="#aab2c0" stroke="#3c4250" strokeWidth="1.3" />
          <rect x="1.5" y="11" width="27" height="18" fill="#ffffff" stroke="#3c4250" strokeWidth="1.5" />
          <rect x="5" y="15" width="20" height="10" fill="#a0a8b6" stroke="#3c4250" />
        </Icon>
      </button>
      <button aria-label="Pan" className="ml-5">
        <Icon size="size-8" box="0 0 32 32">
          <path
            d="M11 30Q9 24 5 19L2 16Q3 13 7 16L11 20L8 7Q9 4 12 7L15 16V3Q17 0 19 3L20 16L24 5Q27 4 26 8L24 18L28 11Q31 10 30 14L27 23Q25 28 23 30Q17 32 11 30Z"
            fill="#fbfbfd"
            stroke="#3c4250"
            strokeWidth="1.5"
            strokeLinejoin="round"
          />
        </Icon>
      </button>
      <button aria-label="Zoom" className="ml-5">
        <Icon size="size-8" box="0 0 32 32">
          <circle cx="12" cy="12" r="10.5" fill="#dcebea" stroke="#3c4250" strokeWidth="1.5" />
          <path d="M6 10Q7 5 12 5" stroke="#ffffff" strokeWidth="3" />
          <path d="M20 20L30 29" stroke="#2b303a" strokeWidth="4.5" />
          <path d="M24 4H31M27.5 1V8M24 11H31" stroke="#333333" strokeWidth="1.3" />
        </Icon>
      </button>
      <button aria-label="Fit" className="ml-5 flex items-center gap-2.5">
        <Icon size="size-8" box="0 0 32 32">
          <path d="M1 2H30V31H1Z" stroke="#777777" strokeDasharray="5 2" />
          <circle cx="12" cy="13" r="10.5" fill="#dcebea" stroke="#3c4250" strokeWidth="1.5" />
          <path d="M20 21L30 30" stroke="#333333" strokeWidth="4.5" />
        </Icon>
        <Caret />
      </button>
      <button aria-label="Display settings" className="ml-3.5 flex items-center gap-1">
        <Icon size="size-[31px]" box="0 0 31 31">
          <rect x="1" y="1" width="29" height="22" fill="#ffffff" stroke="#333333" strokeWidth="1.5" />
          <rect x="4" y="4" width="23" height="16" fill="#95b7e0" stroke="#24477f" strokeWidth="1.5" />
          <path d="M12 24H18L19 28H23V30H7V28H11Z" fill="#c7ccd6" stroke="#555b66" />
        </Icon>
        <Caret />
      </button>
      <button aria-label="Grid settings" className="ml-4">
        <Icon size="size-[30px]" box="0 0 30 30">
          <rect x="1" y="1" width="28" height="28" fill="#e6e9ef" stroke="#222222" strokeWidth="1.5" />
          <path d="M5 1V29M9 1V29M13 1V29M17 1V29M21 1V29M25 1V29M1 5H29M1 9H29M1 13H29M1 17H29M1 21H29M1 25H29" stroke="#555b66" />
        </Icon>
      </button>
    </div>
  );
}

// ---------------------------------------------------------------------------
// Timeline
// ---------------------------------------------------------------------------
const PLAYBACK = [
  ['Go to start', 'M6 5V28M26 6V27L8 16.5Z'],
  ['Step back', 'M22 6V27L4 16.5ZM27 12V22'],
  ['Play', 'M5 3V30L27 16.5Z'],
  ['Step forward', 'M10 6V27L28 16.5ZM5 12V22'],
  ['Go to end', 'M6 6V27L24 16.5ZM26 5V28']
];

const FEATURES: [string, ReactNode][] = [
  ['Sketch1', <SketchEdit />],
  ['Revolve1', <Icon size="size-8"><RevolveShape /></Icon>],
  ['Sketch2', <SketchEdit />],
  ['Extrude1', <Icon size="size-8"><ExtrudeShape /></Icon>],
  ['Pattern1', <CircularPattern />]
];

function Timeline() {
  return (
    <footer className="h-[104px] shrink-0 bg-[#9d9d9d]">
      <div className="flex h-[100px] rounded-bl-2xl border-t-[5px] border-[#cccccc] bg-[#f1f1f1] shadow-[0_1px_2px_#777]">
        <div className="mt-8 ml-[11px] flex h-8 gap-[18px]">
          {PLAYBACK.map(([name, d]) => (
            <button key={name} aria-label={name}>
              <svg className="size-8" viewBox="0 0 32 33" aria-hidden="true">
                <path d={d} fill="#666666" stroke="#666666" strokeWidth="2.5" />
              </svg>
            </button>
          ))}
        </div>
        <div className="mt-[15px] ml-[39px] w-[232px]">
          <div className="h-3 bg-[#e38fe5]" />
          <div className="mt-1 ml-1 flex gap-4">
            {FEATURES.map(([name, icon]) => (
              <button key={name} aria-label={name}>
                {icon}
              </button>
            ))}
          </div>
          <svg className="mt-1.5 ml-5 h-3.5 w-[194px]" viewBox="0 0 194 14" aria-hidden="true">
            <path d="M2 0V12H192V0M49 0V12M97 0V12M144 0V12" fill="none" stroke="#cccccc" strokeWidth="4" />
          </svg>
        </div>
        <svg className="mt-[19px] -ml-2 h-16 w-6" viewBox="0 0 24 64" aria-hidden="true">
          <path d="M0 0H24V9L14 18V64H10V18L0 9Z" fill="#666666" />
        </svg>
      </div>
    </footer>
  );
}

// ---------------------------------------------------------------------------
// Parameters dialog
// ---------------------------------------------------------------------------
type Parameter = { name: string; unit: string; expression: string; favorite: boolean };

const param = (name: string, expression: string, unit = 'mm', favorite = true): Parameter => ({
  name,
  unit,
  expression,
  favorite
});

const SECTIONS = [
  {
    title: 'Favorites',
    rows: [
      param('height', '20 mm'),
      param('spokeW', '3 mm'),
      param('spokeH', '3 mm'),
      param('potD', '170 mm'),
      param('saucerPadding', '10 mm'),
      param('thickness', '3 mm'),
      param('numSpokes', '7', '')
    ]
  },
  {
    title: 'User Parameters',
    rows: [param('bottomThickness', 'thickness', 'mm', false), param('height', '20 mm'), param('spokeW', '3 mm')]
  }
];

function Chevron({ color }: { color: string }) {
  return (
    <svg className="h-2.5 w-4" viewBox="0 0 16 10" fill="none" aria-hidden="true">
      <path d="M1 1L8 8L15 1" stroke={color} strokeWidth="2.5" />
    </svg>
  );
}

function ParametersDialog() {
  const [filter, setFilter] = useState('');

  return (
    <section
      role="dialog"
      aria-label="Parameters"
      className="absolute top-[1214px] left-[55%] w-[2416px] overflow-hidden rounded-[20px] bg-[#f5f5f5] font-[Roboto,sans-serif] text-[25px] text-black shadow-[0_16px_70px_rgba(0,0,0,0.45),0_0_2px_rgba(0,0,0,0.6)]"
    >
      <div className="relative flex h-10 items-center justify-center border-b-2 border-[#cbcbcb] bg-[#f0f0f0] pr-1.5 text-[23px] text-[#4a4a4a]">
        <div className="absolute left-[10px] flex gap-3">
          <button aria-label="Close" className="size-[18px] rounded-full border border-[#e2463f] bg-[#ff5a52]" />
          <button aria-label="Minimize" className="size-[18px] rounded-full border border-[#b9b9b9] bg-[#d1d1d1]" />
          <button aria-label="Zoom window" className="size-[18px] rounded-full border border-[#b9b9b9] bg-[#d1d1d1]" />
        </div>
        <h2>PARAMETERS</h2>
      </div>

      <div className="mt-[22px] flex h-[46px] items-center pr-6 pl-[26px]">
        <button aria-label="All parameters" className="flex size-[46px] items-center justify-center bg-[#cfe1f3]">
          <FxMark />
        </button>
        <span className="ml-5 h-[46px] w-1 bg-[#bbbbbb]" />
        <button aria-label="User parameters" className="ml-7">
          <Icon size="h-9 w-8" box="0 0 32 36">
            <text x="1" y="23" fontFamily='"Liberation Serif", serif' fontSize="30" fontStyle="italic" fill="#777777">fx</text>
            <circle cx="24" cy="21" r="5" fill="#1e88e5" />
            <path d="M16 35Q16 27 24 27T32 35Z" fill="#1e88e5" />
          </Icon>
        </button>
        <button aria-label="Favorites" className="ml-[27px]">
          <StarIcon color="#666666" />
        </button>
        <div className="relative ml-[75px] h-11 flex-1">
          <input
            type="text"
            aria-label="Filter all parameters"
            placeholder="Filter all parameters"
            value={filter}
            onChange={(e) => setFilter(e.target.value)}
            className="h-11 w-full border-2 border-[#999999] bg-white px-2 pb-0.5 placeholder:text-[#c6c6c6]"
          />
          <span className="absolute top-1.5 left-2 h-8 w-0.5 bg-black" />
        </div>
      </div>

      <div className="mt-6 mr-6 ml-6 border border-[#999999]">
        <table className="w-full table-fixed border-separate border-spacing-0 border-t border-l border-[#f8f8f8]">
          <colgroup>
            <col className="w-[452px]" />
            <col className="w-[240px]" />
            <col className="w-[140px]" />
            <col />
          </colgroup>
          <thead>
            <tr className="h-[54px] bg-[#e5e5e5] text-left">
              <th className="border-2 border-[#6b6b6b] pl-2 font-normal">
                <span className="flex items-center justify-between pr-3">
                  Parameter <Chevron color="#222222" />
                </span>
              </th>
              <th className="border-2 border-[#6b6b6b] pl-2 font-normal">Name</th>
              <th className="border-2 border-[#6b6b6b] pl-2 font-normal">Unit</th>
              <th className="border-2 border-[#6b6b6b] pl-2 font-normal">Expression</th>
            </tr>
          </thead>
          {SECTIONS.map((section) => (
            <tbody key={section.title}>
              <tr className="h-[42px] bg-[#eeeeee]">
                <td colSpan={4} className="p-0">
                  <div className="flex h-[42px] items-center font-medium">
                    <button aria-label={`Collapse ${section.title}`} className="flex h-[42px] w-10 items-center justify-center bg-[#f5f5f5] pl-1">
                      <Chevron color="#b5b5b5" />
                    </button>
                    <span className="ml-[11px] flex w-[30px] justify-center">
                      {section.title === 'Favorites' ? <StarIcon /> : <FxMark />}
                    </span>
                    <span className="ml-[13px]">{section.title}</span>
                  </div>
                </td>
              </tr>
              {section.rows.map((row, i) => (
                <tr key={row.name} className={i % 2 ? 'h-[42px] bg-[#f5f5f5]' : 'h-[42px] bg-white'}>
                  <td className="p-0 pl-[85px]">
                    <span className="flex items-center gap-5 leading-[42px]">
                      <button aria-label={`Favorite ${row.name}`}>
                        <StarIcon filled={row.favorite} />
                      </button>
                      User Parameter
                    </span>
                  </td>
                  <td className="p-0 pl-2.5">{row.name}</td>
                  <td className="p-0 pl-2.5">{row.unit}</td>
                  <td className="p-0 pl-2.5">{row.expression}</td>
                </tr>
              ))}
            </tbody>
          ))}
        </table>
        <div className="h-[30px] border-t-2 border-[#e4e4e4] bg-[#fafafa] pt-1.5 pl-1.5">
          <div className="h-4 rounded-full bg-[#7c7c7c]" />
        </div>
      </div>

      <button aria-label="Information" className="mt-[39px] mb-10 ml-7 block">
        <Icon size="size-[27px]" box="0 0 27 27">
          <circle cx="13.5" cy="13.5" r="13" fill="#000000" />
          <circle cx="13.5" cy="7.5" r="2.2" fill="#ffffff" />
          <path d="M10 12H15V19H17V21H10V19H12V14H10Z" fill="#ffffff" />
        </Icon>
      </button>
    </section>
  );
}

export default function App() {
  return (
    <div className="relative flex h-screen flex-col overflow-hidden bg-white font-['Open_Sans',sans-serif]">
      <Toolbar />
      <main className="relative min-h-0 flex-1 overflow-hidden">
        <Model />
        <ViewCube />
        <BrowserPanel />
        <CommentsPanel />
        <NavigationBar />
      </main>
      <Timeline />
      <ParametersDialog />
    </div>
  );
}
